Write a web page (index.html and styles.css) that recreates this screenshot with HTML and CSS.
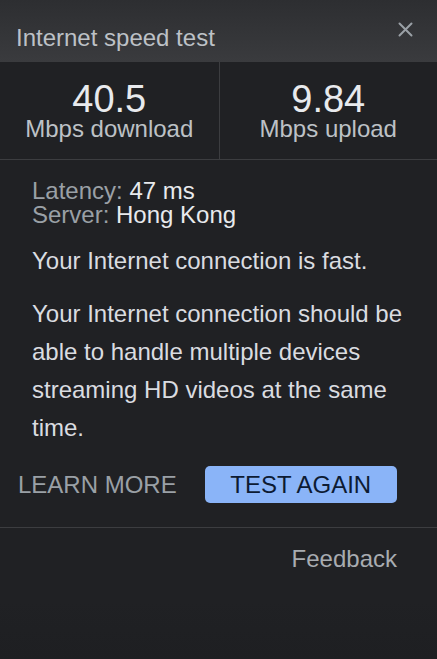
FILE: index.html
```html
<html lang="en">

<head>
  <meta charset="UTF-8">
  <meta name="viewport" content="width=device-width, initial-scale=1.0">
  <title>Internet speed test</title>
  <link rel="stylesheet" href="styles.css">
</head>

<body>
  <div class="panel">
    <div class="panel-header">
      <h1 class="panel-title">Internet speed test</h1>
      <button class="close-btn" aria-label="Close">
        <svg width="15" height="15" viewBox="0 0 15 15">
          <path d="M1.5 1.5 L13.5 13.5 M13.5 1.5 L1.5 13.5" stroke="#9aa0a6" stroke-width="2" stroke-linecap="round" fill="none"/>
        </svg>
      </button>
    </div>

    <div class="stats">
      <div class="stat">
        <div class="stat-value">40.5</div>
        <div class="stat-label">Mbps download</div>
      </div>
      <div class="stat">
        <div class="stat-value">9.84</div>
        <div class="stat-label">Mbps upload</div>
      </div>
    </div>

    <div class="details">
      <div class="meta">
        <div><span class="meta-key">Latency:</span> 47 ms</div>
        <div><span class="meta-key">Server:</span> Hong Kong</div>
      </div>
      <p class="summary">Your Internet connection is fast.</p>
      <p class="summary">Your Internet connection should be able to handle multiple devices streaming HD videos at the same time.</p>
    </div>

    <div class="actions">
      <button class="btn-text">LEARN MORE</button>
      <button class="btn-primary">TEST AGAIN</button>
    </div>

    <div class="footer">
      <a class="feedback" href="#">Feedback</a>
    </div>
  </div>
</body>

</html>
```

FILE: styles.css
```css
body {
  font-family: "Liberation Sans", Arial, sans-serif;
  background-color: #202124;
  margin: 0;
  padding: 0;
}

.panel {
  width: 437px;
  min-height: 659px;
  background: linear-gradient(#202124 0, #202124 600px, #1e1f22 659px);
  color: #dadce0;
}

.panel-header {
  display: flex;
  justify-content: space-between;
  align-items: flex-start;
  height: 62px;
  box-sizing: border-box;
  padding: 0 24px 0 16px;
  background: linear-gradient(#2d2e31, #3a3b3e);
}

.panel-title {
  margin: 0;
  padding-top: 26px;
  font-size: 24px;
  line-height: 24px;
  font-weight: normal;
  color: #bdc1c6;
}

.close-btn {
  margin-top: 22px;
  padding: 0;
  border: none;
  background: none;
  width: 15px;
  height: 15px;
  cursor: pointer;
}

.close-btn svg {
  display: block;
}

.stats {
  display: grid;
  grid-template-columns: 1fr 1fr;
  border-bottom: 1px solid #3c3d40;
}

.stat {
  text-align: center;
  padding: 19px 0 18px;
}

.stat + .stat {
  border-left: 1px solid #3c3d40;
}

.stat-value {
  font-size: 38px;
  line-height: 36px;
  color: #e8eaed;
}

.stat-label {
  font-size: 24px;
  line-height: 24px;
  color: #bdc1c6;
}

.details {
  padding: 19px 32px 0;
}

.meta {
  font-size: 24px;
  line-height: 24px;
  color: #e8eaed;
}

.meta-key {
  color: #9aa0a6;
}

.summary {
  margin: 15px 0 0;
  font-size: 24px;
  line-height: 38px;
  color: #dadce0;
}

.actions {
  display: flex;
  align-items: center;
  gap: 28px;
  padding: 19px 0 24px 18px;
  border-bottom: 1px solid #3c3d40;
}

.actions button {
  font-family: inherit;
  font-size: 24px;
  line-height: 37px;
  height: 37px;
  padding: 0;
  border: none;
  cursor: pointer;
}

.btn-text {
  background: none;
  color: #9aa0a6;
}

.btn-primary {
  width: 192px;
  background-color: #8ab4f8;
  color: #0d1b33;
  border-radius: 5px;
}

.footer {
  display: flex;
  justify-content: flex-end;
  padding: 19px 40px 0;
}

.feedback {
  font-size: 24px;
  line-height: 24px;
  color: #a8acb1;
  text-decoration: none;
}
```
